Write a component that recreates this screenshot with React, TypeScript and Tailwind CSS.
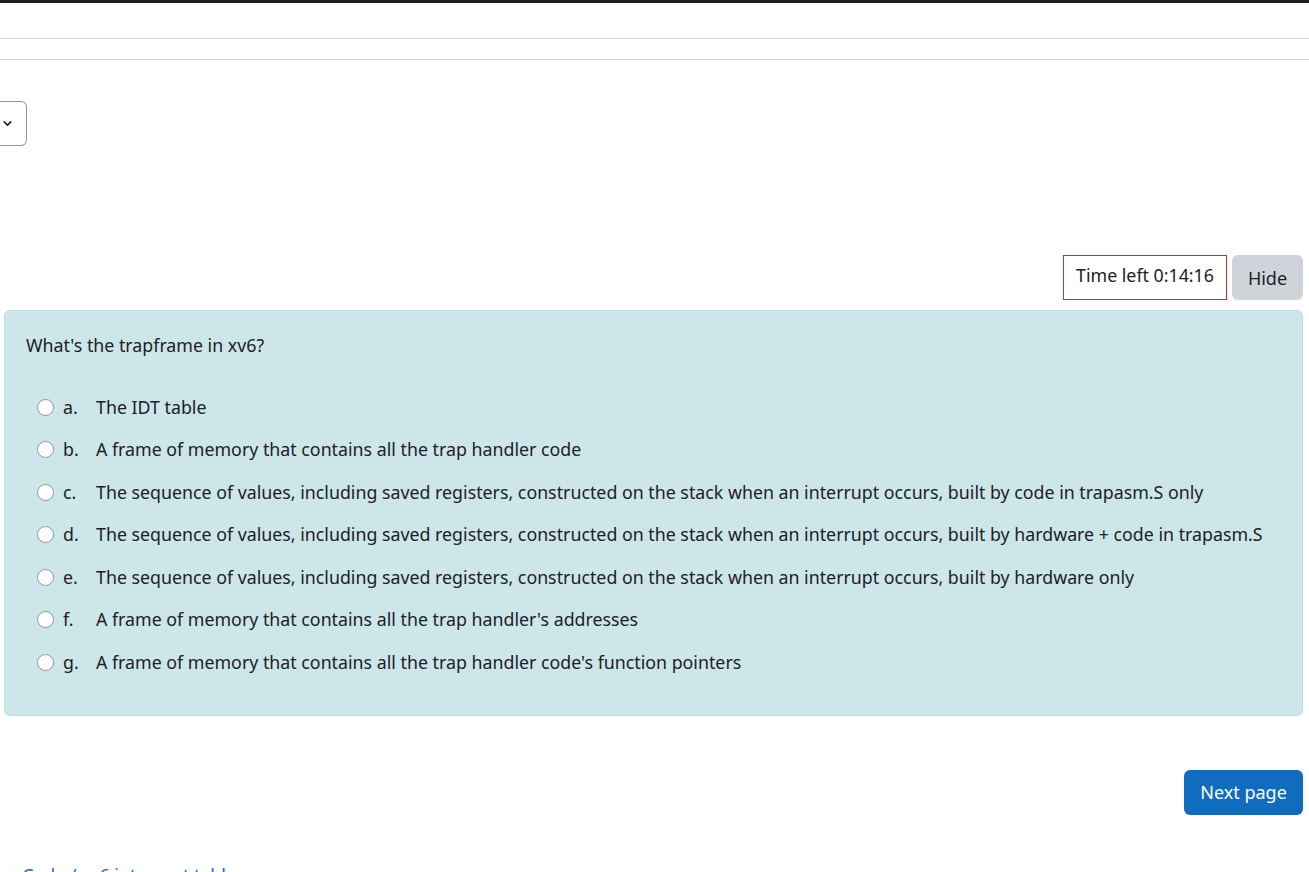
import { ChevronDown } from "lucide-react";

const options = [
  { letter: "a.", text: "The IDT table" },
  { letter: "b.", text: "A frame of memory that contains all the trap handler code" },
  {
    letter: "c.",
    text: "The sequence of values, including saved registers, constructed on the stack when an interrupt occurs, built by code in trapasm.S only",
  },
  {
    letter: "d.",
    text: "The sequence of values, including saved registers, constructed on the stack when an interrupt occurs, built by hardware + code in trapasm.S",
  },
  {
    letter: "e.",
    text: "The sequence of values, including saved registers, constructed on the stack when an interrupt occurs, built by hardware only",
  },
  { letter: "f.", text: "A frame of memory that contains all the trap handler's addresses" },
  { letter: "g.", text: "A frame of memory that contains all the trap handler code's function pointers" },
];

export default function App() {
  return (
    <div
      className="h-[872px] overflow-hidden bg-white text-[#1d2125]"
      style={{ fontFamily: '"Noto Sans", "Open Sans", sans-serif' }}
    >
      {/* top bar */}
      <div className="h-[3px] bg-[#1d2125]" />
      <div className="h-[36px] border-b border-[#d6d6d6]" />
      <div className="h-[21px] border-b border-[#d6d6d6]" />

      {/* select */}
      <div className="mt-[41px] h-[45px] w-[27px] rounded-r-md border border-l-0 border-[#8f959e] flex items-center pl-[1px]">
        <ChevronDown size={13} strokeWidth={3} className="text-[#1d2125]" />
      </div>

      {/* timer */}
      <div className="mt-[109px] flex justify-end gap-[5px] pr-[6px]">
        <div className="h-[45px] w-[164px] border border-[#ca3120] flex items-center justify-center text-[17.8px] pb-[5px]">
          Time left 0:14:16
        </div>
        <button className="h-[45px] w-[71px] rounded-md bg-[#ced4da] text-[18px] pt-[1px]">Hide</button>
      </div>

      {/* question */}
      <div className="mt-[10px] ml-[4px] mr-[6px] h-[406px] rounded-md border border-[#b8dce2] bg-[#cce6ea] px-[21px] pt-[21px]">
        <p className="text-[17.8px] leading-[26px]">What's the trapframe in xv6?</p>
        <div className="mt-[28px] flex flex-col">
          {options.map((o) => (
            <label key={o.letter} className="flex items-center h-[42.5px] pl-[11px] text-[17.8px]">
              <span className="h-[17px] w-[17px] rounded-full border border-[#8f959e] bg-white shrink-0" />
              <span className="ml-[9px] w-[33px]">{o.letter}</span>
              <span className="whitespace-nowrap">{o.text}</span>
            </label>
          ))}
        </div>
      </div>

      {/* next */}
      <div className="mt-[54px] flex justify-end pr-[6px]">
        <button className="h-[45px] w-[119px] rounded-md bg-[#0f6cbf] text-white text-[18px] pb-[1px]">
          Next page
        </button>
      </div>

      <div className="mt-[47px] text-[#0f6cbf] text-[17.8px] whitespace-nowrap">◄ Code / xv6 interrupt table</div>
    </div>
  );
}
